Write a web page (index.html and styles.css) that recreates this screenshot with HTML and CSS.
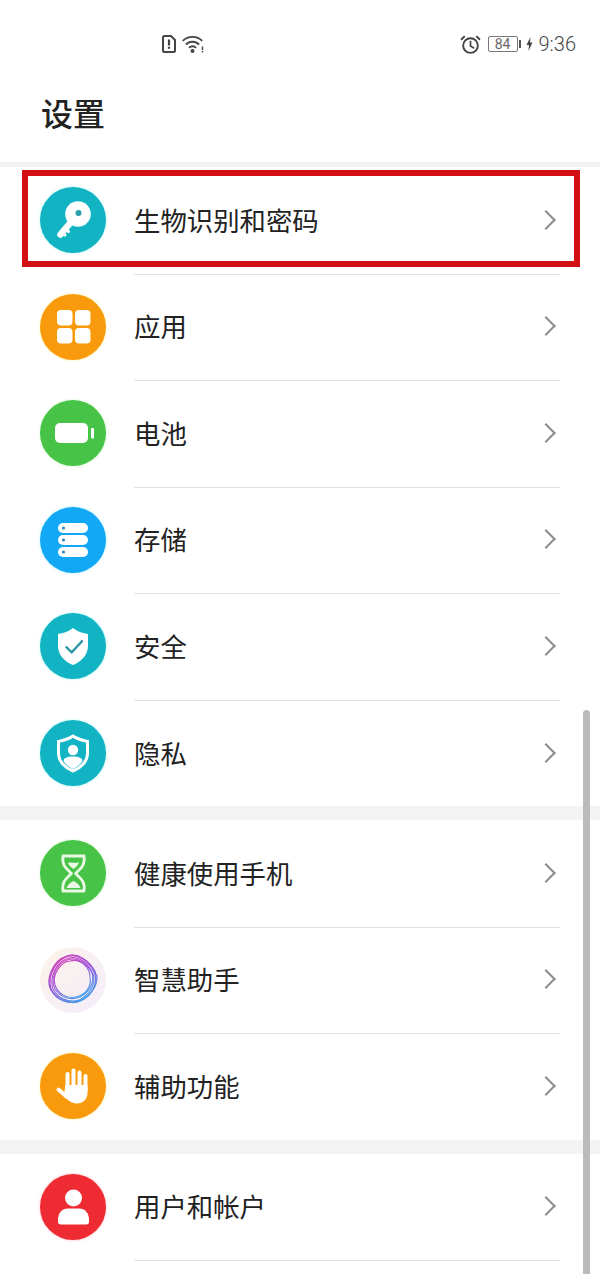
FILE: index.html
```html
<!DOCTYPE html>
<html lang="zh-CN">
<head>
    <meta charset="UTF-8">
    <meta name="viewport" content="width=device-width, initial-scale=1.0">
    <title>设置</title>
    <link rel="stylesheet" href="styles.css">
</head>
<body>
    <div class="phone">
        <div class="status">
            <div class="status-left">
                <!-- sim card with warning mark -->
                <svg class="sim" viewBox="0 0 14 18"><path d="M2.500 1H9l4 4v10.500a1.500 1.500 0 0 1-1.500 1.500h-9A1.500 1.500 0 0 1 1 15.500V2.500A1.500 1.500 0 0 1 2.500 1Z" fill="none" stroke="#444" stroke-width="2"/><path d="M7 4.500v6M7 11.800v2" stroke="#444" stroke-width="2.200"/></svg>
                <!-- wifi -->
                <svg class="wifi" viewBox="0 0 22 18"><g fill="none" stroke="#444" stroke-width="1.900"><path d="M0.800 5.800C6 0.500 15 0.500 20.200 5.800"/><path d="M4 9.500C7.500 5.800 13.500 5.800 17 9.500"/><path d="M7 12.800C9 10.800 12 10.800 14 12.800"/></g><circle cx="10.500" cy="16" r="2" fill="#444"/><path d="M20.500 11.500v3.500M20.500 16v1.600" stroke="#444" stroke-width="1.400"/></svg>
            </div>
            <div class="status-right">
                <svg class="alarm" viewBox="0 0 20 18"><g fill="none" stroke="#444"><circle cx="10" cy="10" r="7" stroke-width="1.800"/><path d="M10 5.500V10.500L13.500 12.500" stroke-width="1.600"/><path d="M1 4.500L4.500 1M19 4.500L15.500 1" stroke-width="1.800"/></g></svg>
                <div class="batt">84</div>
                <div class="batt-tip"></div>
                <svg class="bolt" viewBox="0 0 7 14"><path d="M4.500 0L0.500 8H3L2.500 14L6.500 5.500H4Z" fill="#444"/></svg>
                <span class="time">9:36</span>
            </div>
        </div>

        <h1 class="title">设置</h1>
        <div class="band thin"></div>

        <div class="row">
            <svg class="icon teal" viewBox="0 0 66 66">
                <circle cx="38" cy="27" r="12.800" fill="#fff"/>
                <path d="M31 35L20.500 47.500" stroke="#fff" stroke-width="6.500" stroke-linecap="round"/>
                <path d="M24 41L28.500 44.500M21 44.500L25 48" stroke="#fff" stroke-width="3" stroke-linecap="round"/>
                <circle cx="38.500" cy="26" r="3" fill="#2a9fb0"/>
            </svg>
            <div class="row-body"><span class="label">生物识别和密码</span><span class="chev"></span></div>
            <div class="marker"></div>
        </div>

        <div class="row">
            <svg class="icon orange" viewBox="0 0 66 66">
                <g fill="#fff"><rect x="17" y="16" width="15.500" height="15.500" rx="4"/><rect x="35" y="16" width="15.500" height="15.500" rx="4"/><rect x="17" y="34" width="15.500" height="15.500" rx="4"/><rect x="35" y="34" width="15.500" height="15.500" rx="4"/></g>
            </svg>
            <div class="row-body"><span class="label">应用</span><span class="chev"></span></div>
        </div>

        <div class="row">
            <svg class="icon green" viewBox="0 0 66 66">
                <rect x="15" y="23" width="33" height="20" rx="5" fill="#fff"/>
                <rect x="51" y="28" width="3" height="10.500" rx="1" fill="#fff"/>
            </svg>
            <div class="row-body"><span class="label">电池</span><span class="chev"></span></div>
        </div>

        <div class="row">
            <svg class="icon blue" viewBox="0 0 66 66">
                <g fill="#fff"><rect x="18" y="16" width="30" height="10" rx="5"/><rect x="18" y="28" width="30" height="10" rx="5"/><rect x="18" y="40" width="30" height="10" rx="5"/></g>
                <g fill="#2a86b5"><circle cx="23.500" cy="21" r="1.500"/><circle cx="23.500" cy="33" r="1.500"/><circle cx="23.500" cy="45" r="1.500"/></g>
            </svg>
            <div class="row-body"><span class="label">存储</span><span class="chev"></span></div>
        </div>

        <div class="row">
            <svg class="icon teal" viewBox="0 0 66 66">
                <path d="M33 15C38 19 43 20 48 21V33C48 42 41 49 33 52C25 49 18 42 18 33V21C23 20 28 19 33 15Z" fill="#fff"/>
                <path d="M25.700 33.500L31.700 39.400L42.700 27.500" fill="none" stroke="#2a96a5" stroke-width="2.400"/>
            </svg>
            <div class="row-body"><span class="label">安全</span><span class="chev"></span></div>
        </div>

        <div class="row">
            <svg class="icon teal" viewBox="0 0 66 66">
                <path d="M33 16C38 19.500 43 20.500 47.500 21.500V33C47.500 41.500 41 48 33 51C25 48 18.500 41.500 18.500 33V21.500C23 20.500 28 19.500 33 16Z" fill="none" stroke="#fff" stroke-width="3"/>
                <circle cx="33" cy="30" r="5.200" fill="#fff"/>
                <path d="M23.500 41C23.500 38 27 36.500 33 36.500S42.500 38 42.500 41C40 45 36.500 47.500 33 49C29.500 47.500 26 45 23.500 41Z" fill="#fff"/>
            </svg>
            <div class="row-body last"><span class="label">隐私</span><span class="chev"></span></div>
        </div>

        <div class="band"></div>

        <div class="row">
            <svg class="icon green" viewBox="0 0 66 66">
                <path d="M23 16H44C45.500 26 40 29 35.500 33.500C40 38 45.500 41 44 51H23C21.500 41 27 38 31.500 33.500C27 29 21.500 26 23 16Z" fill="none" stroke="#e8f8e4" stroke-width="2.800" stroke-linejoin="round"/>
                <path d="M28 23C31 21.500 36 24 39 22C38 26 35.500 27.500 33.500 29C31.500 27.500 29 26 28 23ZM26.500 48C28 44 31 42 33.500 41C36 42 39 44 40.500 48Z" fill="#e8f8e4"/>
            </svg>
            <div class="row-body"><span class="label">健康使用手机</span><span class="chev"></span></div>
        </div>

        <div class="row">
            <svg class="icon assistant" viewBox="0 0 66 66">
                <defs>
                    <linearGradient id="ringColor" x1="0.100" y1="0" x2="0.700" y2="1">
                        <stop offset="0" stop-color="#d83fb8"/>
                        <stop offset="0.500" stop-color="#9a55dc"/>
                        <stop offset="1" stop-color="#3f9fe8"/>
                    </linearGradient>
                </defs>
                <g fill="none" stroke="url(#ringColor)" stroke-width="1.100">
                    <path d="M27 9C38 5 50 14 54 25C59 37 52 47 41 53C30 58 17 53 11 43C5 32 13 13 27 9Z"/>
                    <path d="M32 8C43 9 50 17 57 29C58 40 48 52 38 55C26 58 14 50 10 40C7 28 18 9 32 8Z"/>
                    <path d="M24 11C35 5 48 12 55 24C59 36 51 48 44 52C33 58 20 56 13 46C6 35 12 17 24 11Z"/>
                    <path d="M29 11C40 8 49 18 53 27C57 39 47 49 39 53C29 56 18 52 13 42C9 31 16 14 29 11Z"/>
                    <path d="M27 13C37 9 47 16 52 26C55 36 49 45 40 50C30 54 20 50 15 42C10 32 16 16 27 13Z"/>
                    <path d="M30 14C41 11 50 21 50 30C52 40 45 48 36 50C27 52 18 47 15 38C12 28 20 15 30 14Z"/>
                </g>
            </svg>
            <div class="row-body"><span class="label">智慧助手</span><span class="chev"></span></div>
        </div>

        <div class="row">
            <svg class="icon orange" viewBox="0 0 66 66">
                <g stroke="#fff" stroke-width="4" stroke-linecap="round"><path d="M27.500 21V36"/><path d="M33.500 17.500V36"/><path d="M39.500 19.500V36"/><path d="M45.500 23V38"/><path d="M18.500 36.500L27 44"/></g>
                <path d="M25.500 32H47.500V40C47.500 46 43 50.500 37 50.500C32 50.500 29 48 26 45L24 41Z" fill="#fff"/>
            </svg>
            <div class="row-body last"><span class="label">辅助功能</span><span class="chev"></span></div>
        </div>

        <div class="band"></div>

        <div class="row">
            <svg class="icon red" viewBox="0 0 66 66">
                <circle cx="33.500" cy="24" r="8.500" fill="#fff"/>
                <path d="M28 34.500H39C45 34.500 49 39 49 46V48C49 49.500 48 50.500 46.500 50.500H20.500C19 50.500 18 49.500 18 48V46C18 39 22 34.500 28 34.500Z" fill="#fff"/>
            </svg>
            <div class="row-body"><span class="label">用户和帐户</span><span class="chev"></span></div>
        </div>

        <div class="scrollbar"></div>
    </div>
</body>
</html>
```

FILE: styles.css
```css
body {
    margin: 0;
    background-color: #fff;
    font-family: "Noto Sans CJK SC", "Noto Sans", sans-serif;
    color: #222;
}
.phone {
    position: relative;
    width: 600px;
    height: 1274px;
    overflow: hidden;
}

/* status bar */
.status {
    display: flex;
    justify-content: space-between;
    align-items: center;
    height: 18px;
    padding: 35px 24px 0 162px;
}
.status-left,
.status-right {
    display: flex;
    align-items: center;
}
.sim {
    width: 14px;
    height: 18px;
}
.wifi {
    width: 22px;
    height: 18px;
    margin-left: 6px;
}
.alarm {
    width: 21px;
    height: 19px;
    margin-right: 7px;
}
.batt {
    box-sizing: border-box;
    width: 30px;
    height: 16px;
    border: 1px solid #777;
    border-radius: 2px;
    font-family: Roboto, sans-serif;
    font-size: 14px;
    line-height: 14px;
    text-align: center;
    color: #666;
}
.batt-tip {
    width: 2px;
    height: 8px;
    margin-left: 1px;
    background-color: #555;
}
.bolt {
    width: 7px;
    height: 14px;
    margin: 0 6px 0 5px;
}
.time {
    font-family: Roboto, sans-serif;
    font-size: 20px;
    font-weight: 300;
    line-height: 18px;
    color: #444;
}

.title {
    box-sizing: border-box;
    margin: 0;
    height: 109px;
    padding: 41px 0 0 41px;
    font-size: 32px;
    font-weight: 500;
    line-height: 36px;
    color: #222;
}
.band {
    height: 14px;
    background-color: #f3f3f3;
}
.band.thin {
    height: 5px;
}

/* list rows */
.row {
    position: relative;
    display: flex;
    align-items: center;
    height: 106.5px;
    padding-left: 40px;
}
.icon {
    flex: none;
    width: 66px;
    height: 66px;
    border-radius: 50%;
}
.teal {
    background-color: #12b3c3;
    box-shadow: 0 0 3px #aef5f5;
}
.orange {
    background-color: #f99a0c;
    box-shadow: 0 0 3px #fdf0a0;
}
.green {
    background-color: #47c347;
    box-shadow: 0 0 3px #c8f7c0;
}
.blue {
    background-color: #12a8f5;
    box-shadow: 0 0 3px #a8ecfc;
}
.red {
    background-color: #ee2b33;
    box-shadow: 0 0 3px #f8b8bc;
}
.assistant {
    background: linear-gradient(135deg, #fdf3e8, #f4ecfc);
}
.row-body {
    box-sizing: border-box;
    flex: 1;
    align-self: flex-start;
    display: flex;
    justify-content: space-between;
    align-items: center;
    height: calc(100% + 1px);
    margin: 0 40px 0 28px;
    padding-bottom: 1px;
    border-bottom: 1px solid #e2e2e2;
}
.row-body.last {
    border-bottom: none;
}
.label {
    font-size: 26.4px;
    line-height: 36px;
}
.chev {
    width: 12px;
    height: 12px;
    margin-right: 7px;
    border-top: 2.5px solid #8c8c8c;
    border-right: 2.5px solid #8c8c8c;
    transform: rotate(45deg);
}

/* highlight frame around the first row */
.marker {
    position: absolute;
    top: 3px;
    left: 22px;
    right: 20px;
    height: 85px;
    border: 6px solid #d20f12;
}
.scrollbar {
    position: absolute;
    top: 710px;
    left: 583px;
    bottom: 0;
    width: 7px;
    border-radius: 4px 4px 0 0;
    background-color: #bbb;
}
```
